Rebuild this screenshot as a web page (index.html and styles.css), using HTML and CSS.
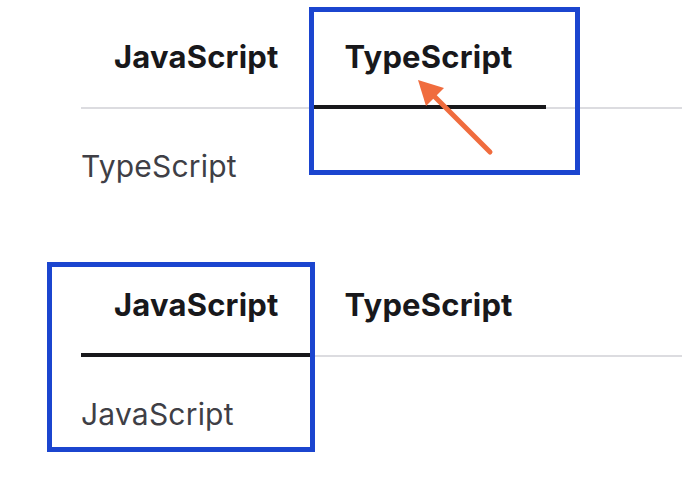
FILE: index.html
```html
<!DOCTYPE html>
<html lang="en">
<head>
<meta charset="utf-8">
<title>Tabs</title>
<link rel="stylesheet" href="styles.css">
</head>
<body>
<div class="page">
  <section class="tabs tabs-first">
    <ul class="tab-list">
      <li class="tab">JavaScript</li>
      <li class="tab active">TypeScript</li>
    </ul>
    <div class="tab-panel">TypeScript</div>
  </section>
  <section class="tabs tabs-second">
    <ul class="tab-list">
      <li class="tab active">JavaScript</li>
      <li class="tab">TypeScript</li>
    </ul>
    <div class="tab-panel">JavaScript</div>
  </section>

  <div class="highlight highlight-one"></div>
  <div class="highlight highlight-two"></div>
  <svg class="arrow" width="682" height="478" viewBox="0 0 682 478">
    <line x1="490" y1="152" x2="428" y2="90" stroke="#f06c3e" stroke-width="5" stroke-linecap="round"/>
    <polygon points="418,80 444,88 426,106" fill="#f06c3e"/>
  </svg>
</div>
</body>
</html>
```

FILE: styles.css
```css
html, body {
  margin: 0;
  padding: 0;
  background: #ffffff;
}

.page {
  position: relative;
  width: 682px;
  height: 478px;
  overflow: hidden;
  padding-left: 81px;
  padding-top: 9px;
  box-sizing: border-box;
  font-family: Inter, "Noto Sans", sans-serif;
}

.tabs-second {
  margin-top: 73px;
}

.tab-list {
  display: flex;
  list-style: none;
  margin: 0;
  padding: 0;
  border-bottom: 2px solid #dcdce0;
}

.tab {
  padding: 30px 33px;
  font-size: 31px;
  line-height: 36px;
  letter-spacing: 0.2px;
  font-weight: 700;
  color: #18181b;
  border-bottom: 4px solid transparent;
  margin-bottom: -2px;
}

.tab.active {
  border-bottom-color: #18181b;
}

.tab-panel {
  margin-top: 39px;
  font-size: 30px;
  line-height: 36px;
  letter-spacing: 0.2px;
  font-weight: 400;
  color: #3f3f46;
}

.highlight {
  position: absolute;
  border: 5px solid #1b45cf;
  box-sizing: border-box;
}

.highlight-one {
  left: 309px;
  top: 7px;
  width: 271px;
  height: 168px;
}

.highlight-two {
  left: 47px;
  top: 262px;
  width: 268px;
  height: 190px;
}

.arrow {
  position: absolute;
  left: 0;
  top: 0;
}
```
